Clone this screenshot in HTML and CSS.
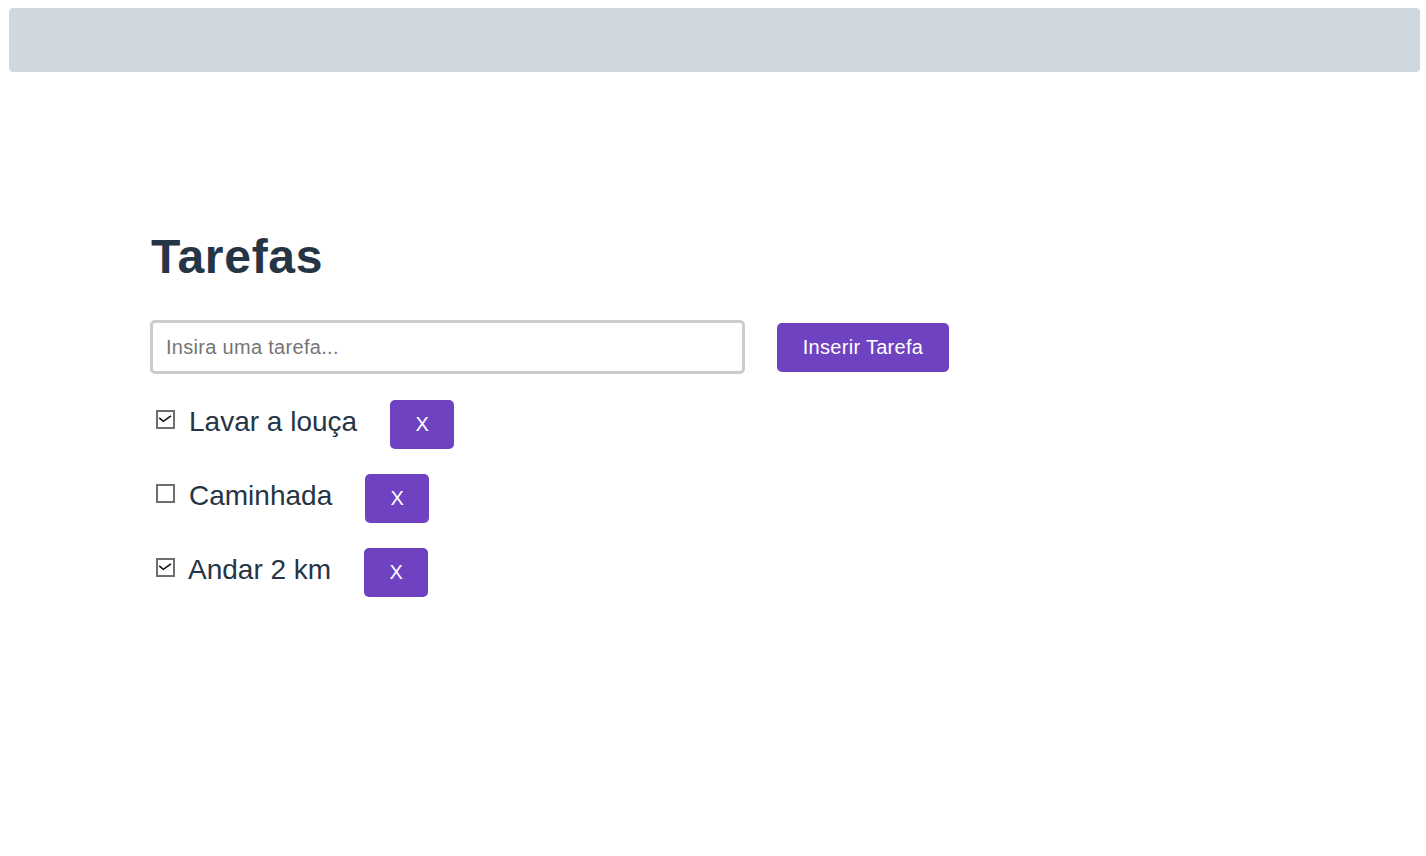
FILE: index.html
```html
<!DOCTYPE html>
<html lang="pt">
<head>
<meta charset="utf-8">
<title>Tarefas</title>
<link rel="stylesheet" href="styles.css">
</head>
<body>
<header class="topbar"></header>
<main class="container">
  <h1 class="title">Tarefas</h1>
  <form class="new-task">
    <input class="task-input" type="text" placeholder="Insira uma tarefa...">
    <button class="btn btn-add" type="button">Inserir Tarefa</button>
  </form>
  <ul class="task-list">
    <li class="task">
      <span class="check checked"><svg viewBox="0 0 19 19" width="19" height="19"><path d="M3.2 7.8 L7.3 11.3 L15 5.8" fill="none" stroke="#111" stroke-width="1.6"/></svg></span>
      <span class="task-text">Lavar a louça</span>
      <button class="btn btn-del" type="button">X</button>
    </li>
    <li class="task">
      <span class="check"></span>
      <span class="task-text">Caminhada</span>
      <button class="btn btn-del" type="button">X</button>
    </li>
    <li class="task">
      <span class="check checked"><svg viewBox="0 0 19 19" width="19" height="19"><path d="M3.2 7.8 L7.3 11.3 L15 5.8" fill="none" stroke="#111" stroke-width="1.6"/></svg></span>
      <span class="task-text narrow">Andar 2 km</span>
      <button class="btn btn-del" type="button">X</button>
    </li>
  </ul>
</main>
</body>
</html>
```
FILE: styles.css
```css
* { box-sizing: border-box; }

body {
  margin: 8px 6px 0 9px;
  font-family: "Liberation Sans", Arial, sans-serif;
  color: #263545;
  background: #fff;
}

.topbar {
  height: 64px;
  background: #cfd8df;
  border-radius: 4px;
}

.container {
  padding-left: 141px;
  margin-top: 157px;
}

.title {
  margin: 0;
  padding-left: 1px;
  font-size: 48px;
  line-height: 55px;
  font-weight: bold;
  letter-spacing: 0.7px;
  color: #263545;
}

.new-task {
  display: flex;
  align-items: center;
  margin-top: 36px;
}

.task-input {
  width: 595px;
  height: 54px;
  border: 3px solid #cccccc;
  border-radius: 5px;
  padding: 0 13px;
  font-family: "Liberation Sans", Arial, sans-serif;
  font-size: 20px;
  letter-spacing: 0.3px;
  color: #263545;
  outline: none;
}

.task-input::placeholder {
  color: #757575;
}

.btn {
  border: none;
  background: #6f42c1;
  color: #fff;
  font-family: "Liberation Sans", Arial, sans-serif;
  font-size: 20px;
  border-radius: 5px;
  height: 49px;
  cursor: pointer;
}

.btn-add {
  width: 172px;
  margin-left: 32px;
  letter-spacing: 0.3px;
}

.task-list {
  list-style: none;
  margin: 26px 0 0;
  padding: 0;
  display: flex;
  flex-direction: column;
  gap: 25px;
}

.task {
  display: flex;
  align-items: center;
  height: 49px;
}

.check {
  width: 19px;
  height: 19px;
  border: 2px solid #6e6e6e;
  margin: 0 14px 10px 6px;
  position: relative;
  flex: none;
}

.check svg {
  position: absolute;
  left: -2px;
  top: -2px;
}

.task-text {
  font-size: 28px;
  line-height: 32px;
  margin-bottom: 5px;
  color: #263545;
}

.task-text.narrow {
  margin-left: -1px;
}

.btn-del {
  width: 64px;
  margin-left: 33px;
}
```
